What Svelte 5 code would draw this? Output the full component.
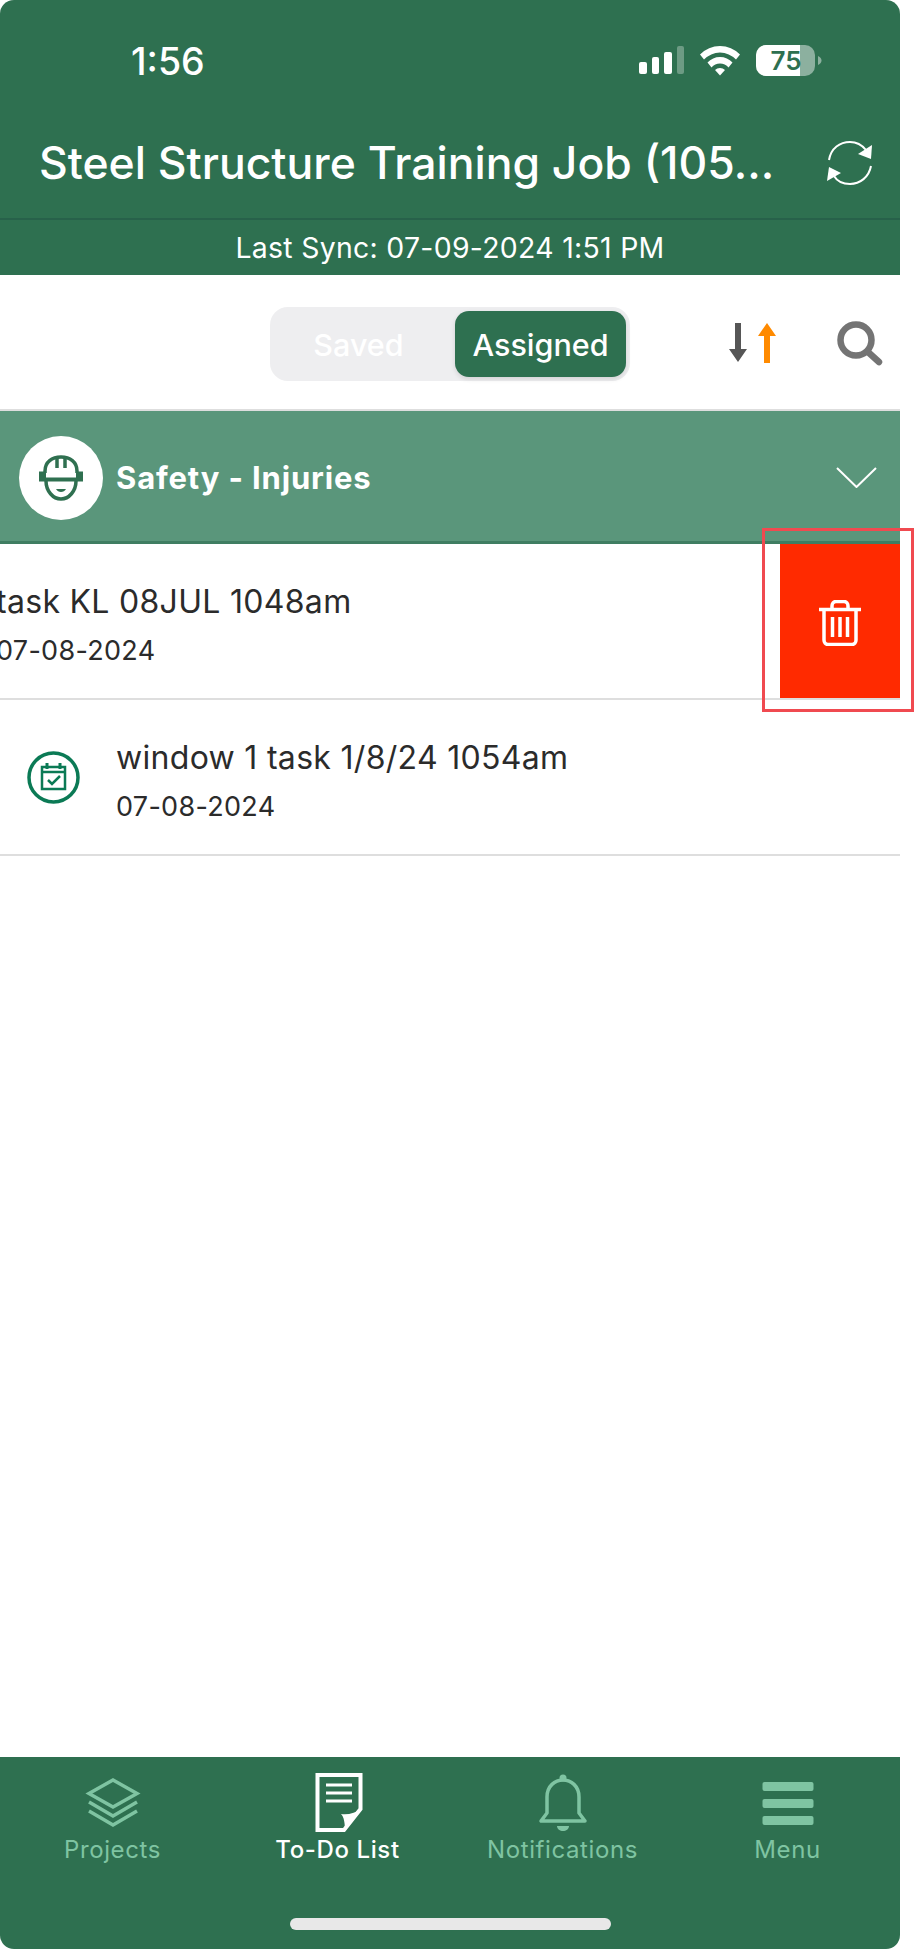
<script lang="ts">
	type Task = { title: string; date: string; swiped: boolean };

	const tasks: Task[] = [
		{ title: 'task KL 08JUL 1048am', date: '07-08-2024', swiped: true },
		{ title: 'window 1 task 1/8/24 1054am', date: '07-08-2024', swiped: false }
	];

	const tabs = [
		{ id: 'projects', label: 'Projects' },
		{ id: 'todo', label: 'To-Do List' },
		{ id: 'bell', label: 'Notifications' },
		{ id: 'menu', label: 'Menu' }
	];

	let active = 'todo';
</script>

<div class="page">
	<div class="phone">
		<header class="header">
			<div class="status">
				<span class="time">1:56</span>
				<svg class="status-icons" width="183" height="32" viewBox="0 0 183 32" fill="#fff">
					<rect x="0" y="17" width="8" height="12" rx="2" />
					<rect x="13" y="12" width="7" height="17" rx="2" />
					<rect x="25" y="7" width="8" height="22" rx="2" />
					<rect x="38" y="1" width="7" height="28" rx="2" opacity="0.3" />
					<path d="M61 9.500a28 28 0 0 1 40 0l-4 5a22 22 0 0 0-32 0z" />
					<path d="M68.500 17.500a17 17 0 0 1 25 0l-4 5a11 11 0 0 0-17 0z" />
					<path d="M76 25a7 7 0 0 1 10 0l-5 5.500z" />
					<rect x="117" y="0" width="59" height="31" rx="10" opacity="0.45" />
					<path d="M127 0h34v31h-34a10 10 0 0 1-10-10V10a10 10 0 0 1 10-10z" />
					<path d="M179 11c2.500 1 3.500 3 3.500 4.500S181.500 19 179 20z" opacity="0.45" />
					<text x="147" y="25" class="battery">75</text>
				</svg>
			</div>
			<div class="title-row">
				<h1 class="title">Steel Structure Training Job (105...</h1>
				<svg width="48" height="46" viewBox="0 0 48 46" fill="none" stroke="#fff" stroke-width="2">
					<path d="M3 20C5 8 14 2 24 2c7 0 12 3 16 8" />
					<path d="M45 26c-2 11-11 18-21 18-7 0-13-3-16-8" />
					<path d="M46 5l-1 14-13-5z" fill="#fff" stroke="none" />
					<path d="M1 41l2-14 12 6z" fill="#fff" stroke="none" />
				</svg>
			</div>
			<div class="sync">Last Sync: 07-09-2024 1:51 PM</div>
		</header>

		<div class="toolbar">
			<div class="segment">
				<span class="seg-item saved">Saved</span>
				<span class="seg-item assigned">Assigned</span>
			</div>
			<svg class="sort" width="47" height="40" viewBox="0 0 47 40">
				<path d="M6 0h6v26h6l-9 13-9-13h6z" fill="#565656" />
				<path d="M35 40V13h-6l9-13 9 13h-6v27z" fill="#ff8a00" />
			</svg>
			<svg class="search" width="47" height="46" viewBox="0 0 47 46" fill="none" stroke="#747474">
				<circle cx="20" cy="20" r="15.500" stroke-width="6.500" />
				<path d="M32 32l11 10" stroke-width="6.500" stroke-linecap="round" />
			</svg>
		</div>

		<div class="group">
			<span class="group-icon">
				<svg width="46" height="46" viewBox="0 0 46 46" fill="none" stroke="#2f7050" stroke-width="3.500">
					<path d="M7 18V16C7 7 14 2 23 2s16 5 16 14v2" />
					<path d="M19 3v10M27 3v10" />
					<path d="M2 17.500h5v6h32v-6h5v8H2z" fill="#2f7050" stroke-width="2" />
					<path d="M8 26c0 10 7 18 15 18s15-8 15-18" />
					<path d="M18 34h10c-1 2-3 3-5 3s-4-1-5-3z" fill="#2f7050" stroke="none" />
				</svg>
			</span>
			<span class="group-title">Safety - Injuries</span>
			<svg class="chevron" width="41" height="21" viewBox="0 0 41 21" fill="none" stroke="#fff" stroke-width="2">
				<path d="M1 1l19.500 19L40 1" />
			</svg>
		</div>

		<main class="list">
			{#each tasks as task}
				<div class="row">
					<div class="row-main" class:swiped={task.swiped}>
						<svg class="task-icon" width="53" height="53" viewBox="0 0 53 53" fill="none" stroke="#0b7a55">
							<circle cx="26.500" cy="26.500" r="24.500" stroke-width="3.500" />
							<rect x="15" y="16" width="23" height="22" stroke-width="2.500" />
							<path d="M15 21h23" stroke-width="2.500" />
							<path d="M20 12v6M33 12v6" stroke-width="3" />
							<path d="M21 29l4 4 8-8" stroke-width="2.500" />
						</svg>
						<div class="row-text">
							<div class="row-title">{task.title}</div>
							<div class="row-date">{task.date}</div>
						</div>
					</div>
					{#if task.swiped}
						<div class="delete">
							<svg width="42" height="46" viewBox="0 0 42 46" fill="none" stroke="#fff" stroke-width="3.500">
								<path d="M0 9.500h42" />
								<path d="M13 9V6c0-2.500 1.500-4.500 4-4.500h8c2.500 0 4 2 4 4.500v3" />
								<path d="M5 10v30c0 2.500 1.500 4.500 4 4.500h24c2.500 0 4-2 4-4.500V10" />
								<path d="M13.500 17v20M21 17v20M28.500 17v20" />
							</svg>
						</div>
					{/if}
				</div>
			{/each}
		</main>

		<nav class="tabbar">
			<div class="tabs">
				{#each tabs as tab}
					<div class="tab" class:active={tab.id === active}>
						<svg width="60" height="60" viewBox="0 0 60 60" fill="none" stroke="currentColor" stroke-width="3.500">
							{#if tab.id === 'projects'}
								<path d="M30 7l24 13.500L30 34 6 20.500z" />
								<path d="M6 29l24 14 24-14" />
								<path d="M6 38l24 14 24-14" />
							{:else if tab.id === 'todo'}
								<path d="M9.500 2h43v34L36 57H9.500z" stroke-width="4" />
								<path d="M18 12h26M18 20h26M18 28h26" stroke-width="3" />
								<path d="M33 41c7 1 15-1 20-5L37 58c0-8-1-14-4-17z" fill="currentColor" stroke="none" />
							{:else if tab.id === 'bell'}
								<path d="M8 48h44l-6-8V24C46 13 38 7 30 7S14 13 14 24v16z" stroke-linejoin="round" />
								<circle cx="30" cy="5" r="3.500" fill="currentColor" stroke="none" />
								<path d="M24 53h12c0 3-3 5-6 5s-6-2-6-5z" fill="currentColor" stroke="none" />
							{:else}
								<rect x="4.500" y="9" width="51" height="9" rx="2" fill="currentColor" stroke="none" />
								<rect x="4.500" y="26" width="51" height="9" rx="2" fill="currentColor" stroke="none" />
								<rect x="4.500" y="43" width="51" height="9" rx="2" fill="currentColor" stroke="none" />
							{/if}
						</svg>
						<span class="tab-label">{tab.label}</span>
					</div>
				{/each}
			</div>
			<div class="home-bar"></div>
		</nav>
	</div>

	<!-- highlight drawn over the swipe action -->
	<div class="callout"></div>
</div>

<style>
	:global(body) {
		background: #fff;
	}

	.page {
		position: relative;
		width: 914px;
		height: 1949px;
		overflow: hidden;
		font-family: Inter, 'Noto Sans', sans-serif;
	}

	.phone {
		display: flex;
		flex-direction: column;
		width: 900px;
		height: 100%;
	}

	.header {
		background: #2e7050;
		color: #fff;
		border-radius: 14px 14px 0 0;
	}

	.status {
		display: flex;
		align-items: center;
		height: 122px;
		padding: 0 78px 0 131px;
	}

	.time {
		font-size: 37.500px;
		font-weight: 500;
	}

	.status-icons {
		margin-left: auto;
	}

	.battery {
		fill: #2e7050;
		stroke: none;
		font-size: 26px;
		font-weight: 600;
		text-anchor: middle;
	}

	.title-row {
		display: flex;
		align-items: center;
		justify-content: space-between;
		height: 82px;
		padding: 0 26px 14px 39px;
		border-bottom: 2px solid #27614a;
	}

	.title {
		margin: 0;
		font-size: 44.500px;
		font-weight: 500;
		white-space: nowrap;
	}

	.sync {
		height: 55px;
		line-height: 55px;
		text-align: center;
		font-size: 28.400px;
		letter-spacing: 0.3px;
	}

	.toolbar {
		display: flex;
		align-items: center;
		height: 136px;
		padding: 2px 0 0 270px;
		background: #fff;
		border-bottom: 2px solid #dedede;
		box-sizing: border-box;
	}

	.segment {
		display: flex;
		align-items: stretch;
		width: 360px;
		height: 74px;
		margin-top: 2px;
		padding: 4px;
		box-sizing: border-box;
		background: #eeeef0;
		border-radius: 18px;
	}

	.seg-item {
		display: flex;
		align-items: center;
		justify-content: center;
		font-size: 30.500px;
		font-weight: 500;
		color: #fff;
	}

	.saved {
		flex: 1;
		padding-right: 12px;
	}

	.assigned {
		width: 171px;
		background: #2e7050;
		border-radius: 14px;
		box-shadow: 0 2px 5px rgba(0, 0, 0, 0.12);
	}

	.sort {
		margin-left: 99px;
	}

	.search {
		margin-left: 60px;
	}

	.group {
		display: flex;
		align-items: center;
		height: 133px;
		padding: 3px 23px 0 19px;
		box-sizing: border-box;
		background: #5a967b;
		border-bottom: 3px solid #3f7d62;
	}

	.group-icon {
		display: flex;
		align-items: center;
		justify-content: center;
		width: 84px;
		height: 84px;
		background: #fff;
		border-radius: 50%;
	}

	.group-title {
		margin-left: 13px;
		font-size: 31px;
		font-weight: 700;
		letter-spacing: 0.85px;
		color: #fff;
	}

	.chevron {
		margin-left: auto;
	}

	.list {
		flex: 1;
		background: #fff;
	}

	.row {
		display: flex;
		height: 156px;
		overflow: hidden;
		box-sizing: border-box;
		border-bottom: 2px solid #dedede;
	}

	.row-main {
		display: flex;
		flex: 1;
		align-items: center;
		padding-left: 27px;
	}

	.row-main.swiped {
		margin-left: -120px;
	}

	.task-icon {
		flex: none;
		margin-top: 1px;
	}

	.row-text {
		margin-left: 36px;
		padding-top: 9px;
		color: #2b2b2b;
	}

	.row-title {
		font-size: 32px;
		line-height: 38px;
		letter-spacing: 0.3px;
		white-space: nowrap;
	}

	.row-date {
		margin-top: 12px;
		font-size: 27px;
		line-height: 36px;
		letter-spacing: 0.3px;
	}

	.delete {
		display: flex;
		flex: none;
		align-items: center;
		justify-content: center;
		width: 120px;
		padding-top: 3px;
		box-sizing: border-box;
		background: #ff2a00;
	}

	.tabbar {
		display: flex;
		flex-direction: column;
		height: 192px;
		padding-top: 16px;
		box-sizing: border-box;
		background: #2e7050;
		border-radius: 0 0 14px 14px;
	}

	.tabs {
		display: grid;
		grid-template-columns: repeat(4, 1fr);
	}

	.tab {
		display: flex;
		flex-direction: column;
		align-items: center;
		color: #7fc4a2;
	}

	.tab.active {
		color: #fff;
	}

	.tab-label {
		margin-top: 2px;
		font-size: 24px;
		line-height: 30px;
		letter-spacing: 0.6px;
	}

	.tab.active .tab-label {
		font-weight: 500;
	}

	.home-bar {
		align-self: center;
		width: 321px;
		height: 12px;
		margin-top: 53px;
		background: #e8e8e8;
		border-radius: 6px;
	}

	.callout {
		position: absolute;
		left: 762px;
		top: 528px;
		width: 152px;
		height: 184px;
		box-sizing: border-box;
		border: 3px solid #f04a50;
	}
</style>
